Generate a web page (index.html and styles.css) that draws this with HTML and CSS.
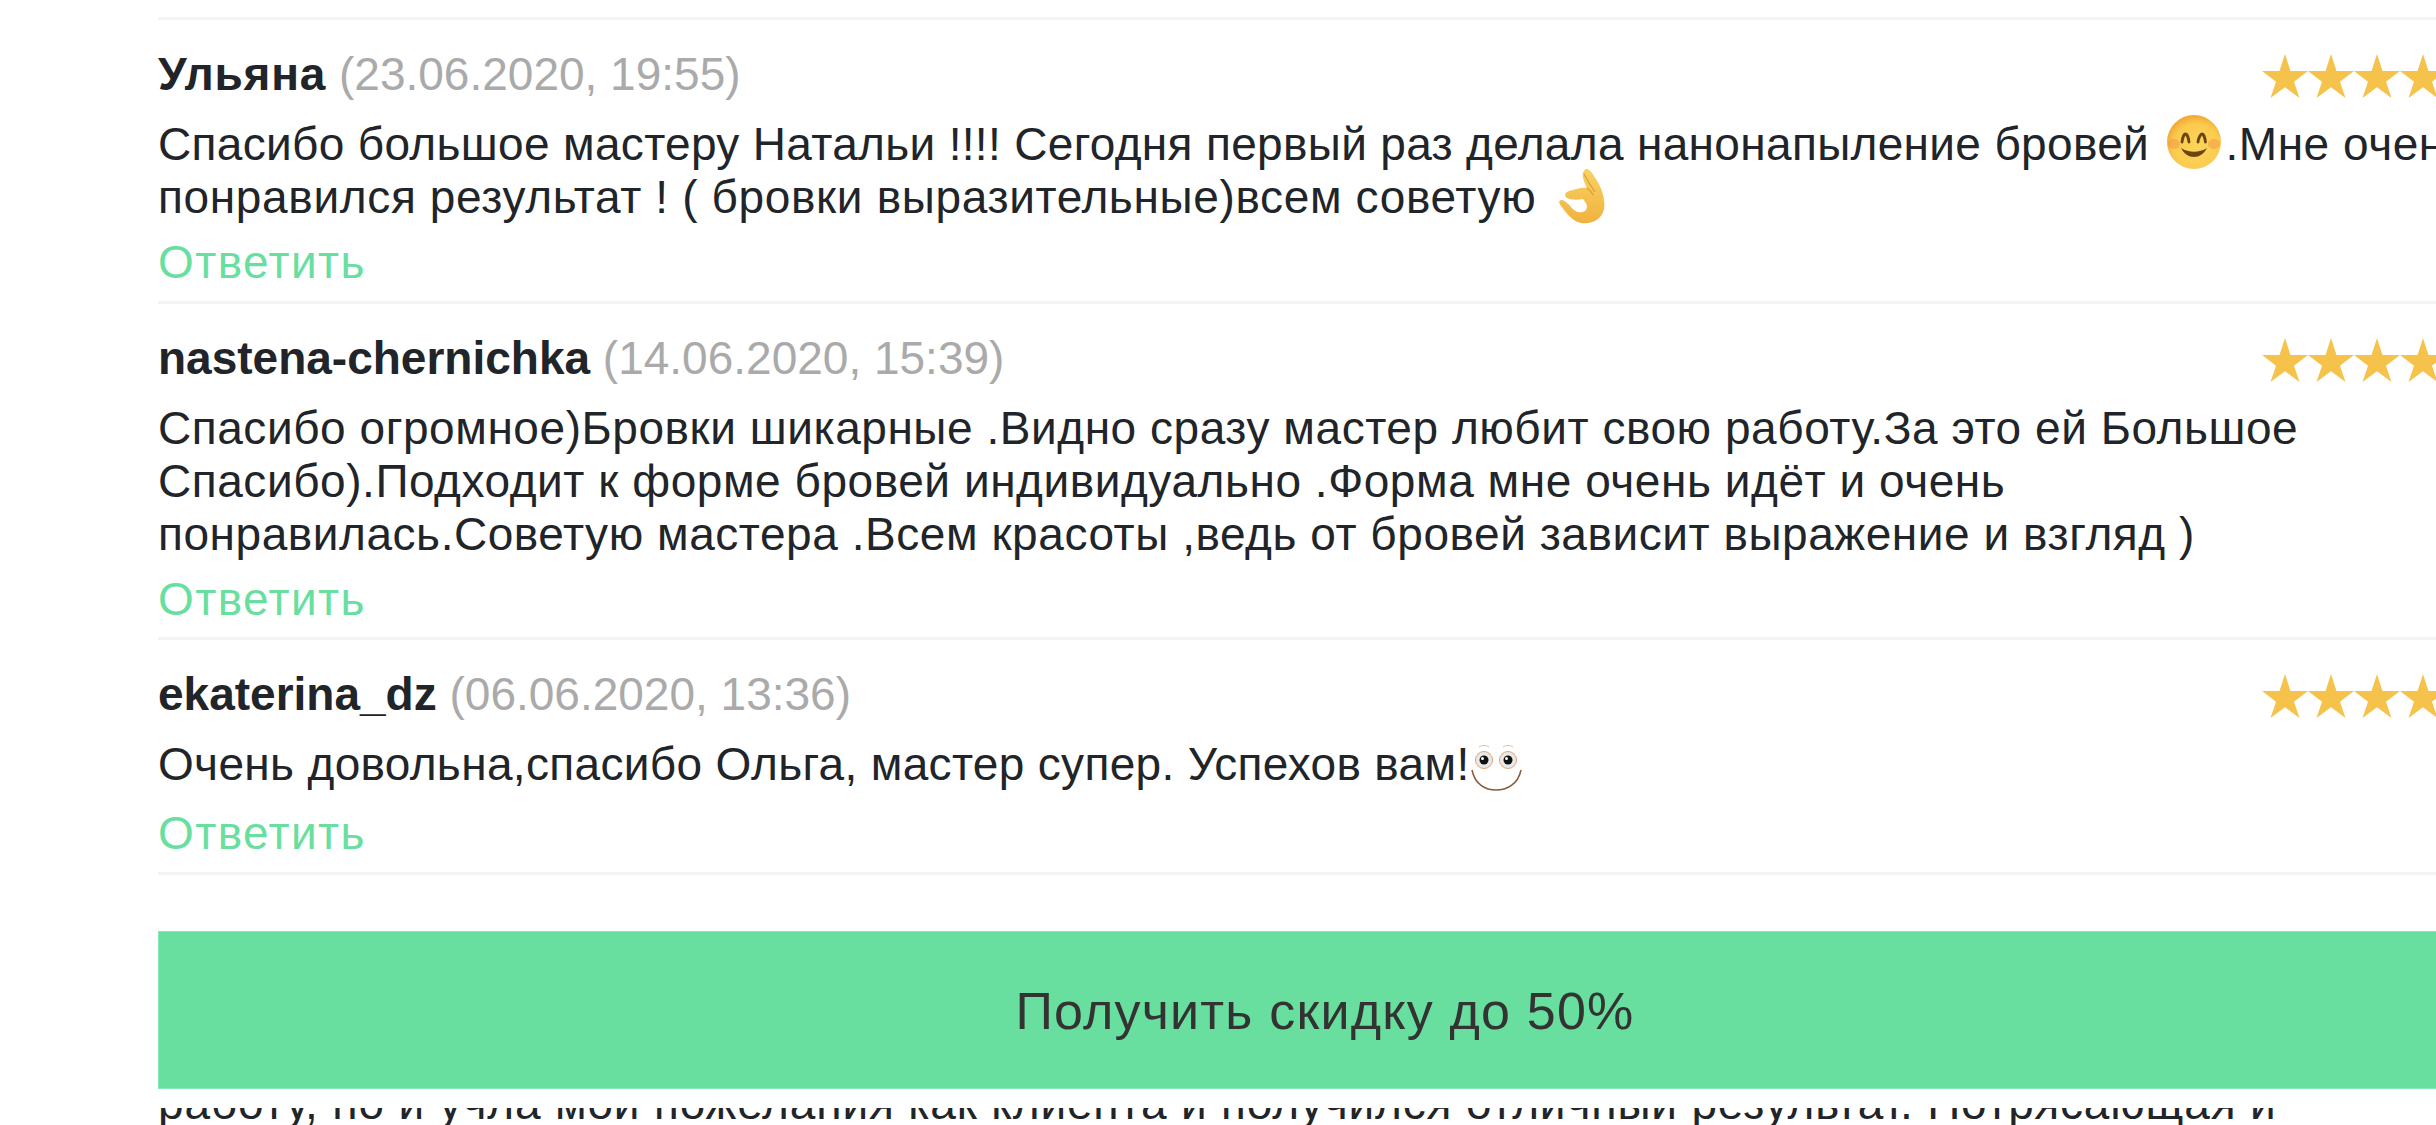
FILE: index.html
```html
<!DOCTYPE html>
<html lang="ru">
<head>
<meta charset="utf-8">
<title>Отзывы</title>
<link rel="stylesheet" href="styles.css">
</head>
<body>
<svg class="defs" width="0" height="0" aria-hidden="true">
  <defs>
    <symbol id="star" viewBox="0 0 46 44"><path d="M23 0l5.500 17H46L32 27.700 37.500 44 23 33.300 8.500 44 14 27.700 0 17h17.500z"/></symbol>
    <radialGradient id="face" cx=".55" cy=".6" r=".62"><stop offset="0" stop-color="#fcd55a"/><stop offset=".7" stop-color="#fbcb4e"/><stop offset="1" stop-color="#efa332"/></radialGradient>
    <linearGradient id="hand" x1="0" y1="0" x2="0" y2="1"><stop offset="0" stop-color="#f9d264"/><stop offset="1" stop-color="#f0b23e"/></linearGradient>
  </defs>
</svg>
<main class="page">
  <section class="comment">
    <div class="head">
      <div class="who"><b class="name name-cyr">Ульяна</b> <span class="date">(23.06.2020, 19:55)</span></div>
      <div class="stars"><svg class="star"><use href="#star"/></svg><svg class="star"><use href="#star"/></svg><svg class="star"><use href="#star"/></svg><svg class="star"><use href="#star"/></svg><svg class="star"><use href="#star"/></svg></div>
    </div>
    <p class="text"><span class="tight">Спасибо большое мастеру Натальи !!!! Сегодня первый раз делала нанонапыление бровей</span> <svg class="emoji" viewBox="0 0 54 54"><circle cx="27" cy="27" r="27" fill="url(#face)"/><ellipse cx="7" cy="29" rx="6" ry="5" fill="#f2904a" opacity=".45"/><ellipse cx="47" cy="29" rx="6" ry="5" fill="#f2904a" opacity=".45"/><path d="M15 27c.5-4 2-8 3.500-8s3 4 3.500 8M31 27c.5-4 2.500-8 4-8s3 4 3.500 8" fill="none" stroke="#6b4515" stroke-width="2.800" stroke-linecap="round"/><path d="M14 33c8 5 18 5 26 0-3 6-8 9-13 9s-10-3-13-9z" fill="#6b4515"/></svg>.Мне очень<br><span class="wide">понравился результат ! ( бровки выразительные)всем советую</span> <svg class="emoji emoji-hand" viewBox="40 18 130 156"><path d="M118 22C128 24 140 45 150 62 162 85 168 110 165 130 160 155 140 170 112 170 85 170 68 150 52 128 45 118 40 112 46 108 54 104 62 112 72 122 80 134 92 142 104 140 116 138 122 128 116 116L108 104C92 108 70 106 62 100 56 92 62 84 72 82 88 78 104 72 118 74 112 60 104 45 108 32 110 26 114 22 118 22Z" fill="url(#hand)"/><path d="M110 36c8 14 16 30 30 48M118 74c6 4 12 10 18 20" stroke="#dd9a2e" stroke-width="3" fill="none"/></svg></p>
    <a class="reply" href="#">Ответить</a>
  </section>
  <section class="comment">
    <div class="head">
      <div class="who"><b class="name">nastena-chernichka</b> <span class="date">(14.06.2020, 15:39)</span></div>
      <div class="stars"><svg class="star"><use href="#star"/></svg><svg class="star"><use href="#star"/></svg><svg class="star"><use href="#star"/></svg><svg class="star"><use href="#star"/></svg><svg class="star"><use href="#star"/></svg></div>
    </div>
    <p class="text">Спасибо огромное)Бровки шикарные .Видно сразу мастер любит свою работу.За это ей Большое<br>Спасибо).Подходит к форме бровей индивидуально .Форма мне очень идёт и очень<br>понравилась.Советую мастера .Всем красоты ,ведь от бровей зависит выражение и взгляд )</p>
    <a class="reply" href="#">Ответить</a>
  </section>
  <section class="comment">
    <div class="head">
      <div class="who"><b class="name">ekaterina_dz</b> <span class="date">(06.06.2020, 13:36)</span></div>
      <div class="stars"><svg class="star"><use href="#star"/></svg><svg class="star"><use href="#star"/></svg><svg class="star"><use href="#star"/></svg><svg class="star"><use href="#star"/></svg><svg class="star"><use href="#star"/></svg></div>
    </div>
    <p class="text"><span class="tight">Очень довольна,спасибо Ольга, мастер супер. Успехов вам!</span><svg class="emoji emoji-eyes" viewBox="0 0 54 50"><path d="M9 3c3-2 7-2 10 0M33 3c3-2 7-2 10 0" fill="none" stroke="#eeb48c" stroke-width="1"/><circle cx="14" cy="16" r="8.500" fill="#e6eaea" stroke="#e3a377"/><circle cx="38" cy="16" r="8.500" fill="#e6eaea" stroke="#e3a377"/><circle cx="14" cy="16" r="4.500" fill="#111"/><circle cx="38" cy="16" r="4.500" fill="#111"/><circle cx="12.500" cy="14.500" r="1.500" fill="#fff"/><circle cx="36.500" cy="14.500" r="1.500" fill="#fff"/><path d="M2 26c3 15 14 20 24 20s22-5 25-20" fill="none" stroke="#8a5a3a" stroke-width="1.500"/></svg></p>
    <a class="reply" href="#">Ответить</a>
  </section>
  <div class="cta-wrap"><a class="cta" href="#">Получить скидку до 50%</a></div>
  <p class="text next">работу, но и учла мои пожелания как клиента и получился отличный результат. Потрясающая и</p>
</main>
</body>
</html>
```
FILE: styles.css
```css
html, body { margin: 0; height: 1125px; overflow: hidden; background: #fff; }
body { font-family: "Liberation Sans", Arial, sans-serif; color: #212529; }
.defs { position: absolute; }
.page { width: 2334px; margin-left: 158px; padding-top: 17px; }
.comment { border-top: 3px solid #f3f3f3; padding-bottom: 11.5px; }
.comment:nth-of-type(3) { border-bottom: 3px solid #f3f3f3; }
.head { display: flex; justify-content: space-between; align-items: flex-start; padding-top: 28px; height: 54px; }
.who { font-size: 46px; line-height: 53px; white-space: nowrap; }
.name { font-weight: 700; }
.name-cyr { letter-spacing: 0.8px; }
.date { color: #aaa; }
.stars { display: flex; margin-top: 6px; flex: none; width: 230px; }
.star { width: 46px; height: 44px; fill: #f5c34b; flex: none; }
.text { margin: 16px 0 0; font-size: 46px; line-height: 53px; white-space: nowrap; letter-spacing: 0.55px; }
.tight { letter-spacing: 0.33px; }
.wide { letter-spacing: 0.65px; }
.emoji { width: 54px; height: 54px; vertical-align: -4px; margin: -5px 4px -5px 5px; }
.emoji-hand { width: 48px; height: 58px; vertical-align: -4px; margin: -8px 0 -8px 8px; }
.emoji-eyes { width: 54px; height: 52px; vertical-align: -15px; margin: -4px 0 0; }
.reply { display: block; margin-top: 12px; font-size: 46px; line-height: 53px; letter-spacing: 1.4px; color: #68df9f; text-decoration: none; }
.cta-wrap { position: relative; z-index: 1; padding: 56px 0 19px; background: #fff; }
.cta { display: block; box-sizing: border-box; height: 158px; line-height: 158px; text-align: center; font-size: 52px; letter-spacing: 1.2px; color: #333; background: #68df9f; border: 1px solid #86e8b4; text-decoration: none; }
.next { margin-top: -31px; letter-spacing: 0.83px; }
```
